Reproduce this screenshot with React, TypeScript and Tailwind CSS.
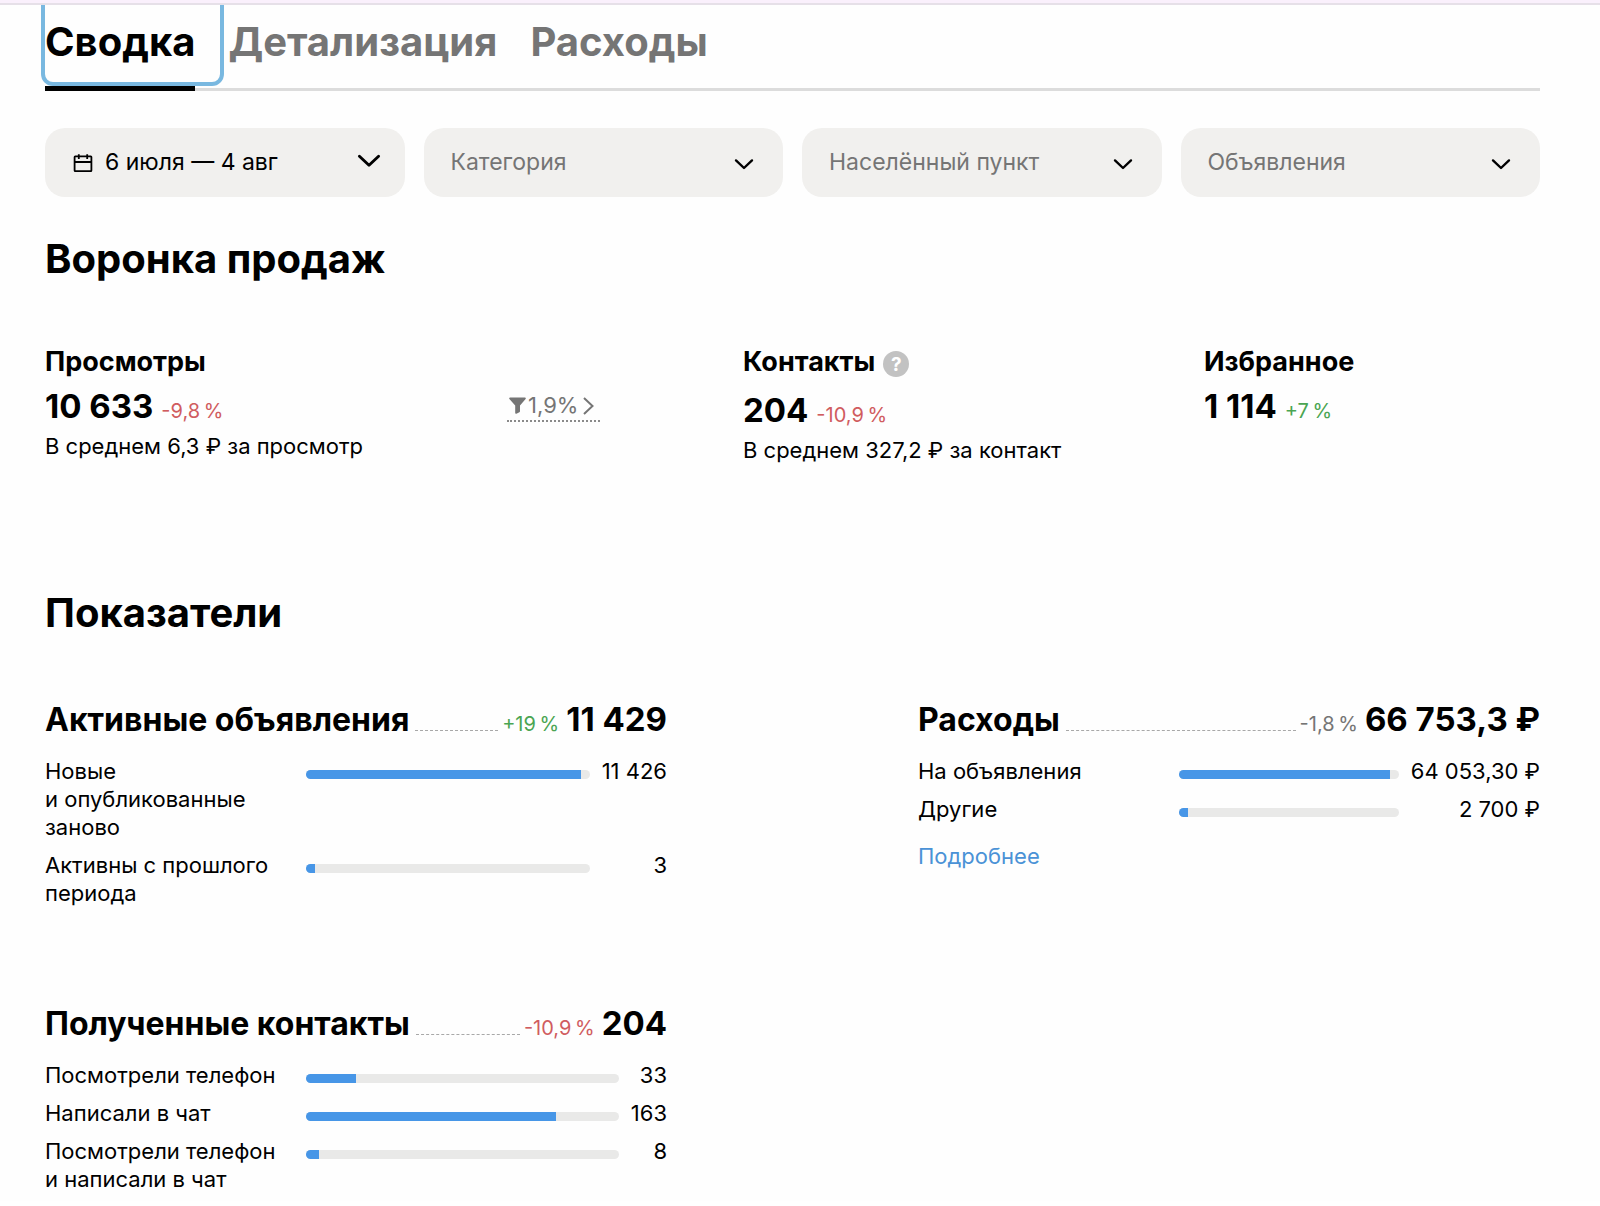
import { Fragment, type ReactNode } from "react";

type Tone = "up" | "down" | "neutral";

const toneClass: Record<Tone, string> = {
  up: "text-[#4aa552]",
  down: "text-[#d05c5f]",
  neutral: "text-[#757575]",
};

function Change({ tone, children }: { tone: Tone; children: ReactNode }) {
  return <span className={`text-[20px] ${toneClass[tone]}`}>{children}</span>;
}

function CalendarIcon() {
  return (
    <svg aria-hidden="true" viewBox="0 0 20 20" className="size-5 shrink-0" fill="none" stroke="currentColor" strokeWidth="1.8">
      <rect x="1.6" y="3.4" width="16.8" height="14.8" rx="0.6" />
      <path d="M2 9h16M5.8 1.2v4.8M14.2 1.2v4.8" />
    </svg>
  );
}

function ChevronDown({ className }: { className: string }) {
  return (
    <svg aria-hidden="true" viewBox="0 0 20 12" className={className} fill="none" stroke="currentColor" strokeWidth="2.4" strokeLinecap="round" strokeLinejoin="round">
      <path d="M2 2.4l8 7.6 8-7.6" />
    </svg>
  );
}

function FilterSelect({ label }: { label: string }) {
  return (
    <div className="relative">
      <select
        aria-label={label}
        defaultValue=""
        className="h-[69px] w-full appearance-none rounded-[20px] bg-[#f1f0ee] pr-16 pl-[27px] text-[23px] text-[#757575]"
      >
        <option value="">{label}</option>
      </select>
      <ChevronDown className="pointer-events-none absolute top-[30px] right-[29px] h-3 w-5 text-black" />
    </div>
  );
}

function Tabs() {
  return (
    <nav className="mr-15 ml-[45px] flex items-end gap-2 border-b-[3px] border-[#dcdcdc] pb-[6px]">
      <button className="relative -mt-3 rounded-lg pt-[25px] pr-[25px] pb-4 text-[40px] leading-12 font-bold outline-4 outline-[#79b8e0]">
        Сводка
        <span className="absolute right-[25px] -bottom-[9px] left-0 h-[5px] bg-black" />
      </button>
      <button className="pr-[25px] pb-4 text-[40px] leading-12 font-bold text-[#757575]">Детализация</button>
      <button className="pb-4 text-[40px] leading-12 font-bold text-[#757575]">Расходы</button>
    </nav>
  );
}

function Stat({
  title,
  hint,
  value,
  tone,
  change,
  note,
}: {
  title: string;
  hint?: boolean;
  value: string;
  tone: Tone;
  change: string;
  note?: string;
}) {
  return (
    <div>
      <div className={hint ? "flex items-center gap-2 pb-1" : "flex items-center"}>
        <h3 className="text-[27px] leading-9 font-bold">{title}</h3>
        {hint && (
          <button aria-label="Подсказка" className="mt-1 grid size-[26px] place-items-center rounded-full bg-[#c2c2c2] text-[19px] leading-none font-bold text-white">
            ?
          </button>
        )}
      </div>
      <p className="flex items-baseline gap-2 pt-[6px] leading-10">
        <strong className="text-[33px] font-bold">{value}</strong>
        <Change tone={tone}>{change}</Change>
      </p>
      {note && <p className="pt-px text-[22px] leading-7">{note}</p>}
    </div>
  );
}

function Conversion() {
  return (
    <button className="flex h-[31px] items-center gap-[2px] border-b-2 border-dotted border-[#8a8a8a] pr-[6px] pl-[2px] text-[22px] text-[#757575]">
      <svg aria-hidden="true" viewBox="0 0 17 17" className="size-[17px]" fill="currentColor">
        <path d="M1.2.4h14.6c1 0 1.3.9.8 1.6L11 8.6v5.6c0 .5-.2.8-.6 1l-3 1.5c-.6.3-1.2 0-1.2-.7V8.600L.4 2C-.1 1.300.2.4 1.2.4z" />
      </svg>
      1,9%
      <svg aria-hidden="true" viewBox="0 0 11 18" className="ml-[3px] h-[18px] w-[11px]" fill="none" stroke="currentColor" strokeWidth="2">
        <path d="M1 1l8.500 8L1 17" />
      </svg>
    </button>
  );
}

type Row = { label: string; percent: number; value: string };

function Metric({
  title,
  tone,
  change,
  total,
  rows,
  children,
}: {
  title: string;
  tone: Tone;
  change: string;
  total: string;
  rows: Row[];
  children?: ReactNode;
}) {
  return (
    <section>
      <div className="flex items-baseline leading-10">
        <h3 className="text-[32px] font-bold">{title}</h3>
        <span className="mr-1 ml-[6px] grow border-b border-dashed border-[#a8a8a8]" />
        <Change tone={tone}>{change}</Change>
        <strong className="ml-[7px] text-[33px] font-bold">{total}</strong>
      </div>
      <div className="mt-[13px] grid grid-cols-[42%_1fr_auto] gap-y-[10px] text-[22px] leading-7">
        {rows.map((row) => (
          <Fragment key={row.label}>
            <div className="pr-5">{row.label}</div>
            <div role="meter" aria-label={row.label} aria-valuenow={row.percent} aria-valuemin={0} aria-valuemax={100} className="mt-[13px] h-[9px] overflow-hidden rounded-full bg-[#e9e9e8]">
              <div className="h-full bg-[#4796e7]" style={{ width: `${row.percent}%` }} />
            </div>
            <div className="pl-3 text-right">{row.value}</div>
          </Fragment>
        ))}
      </div>
      {children}
    </section>
  );
}

export default function App() {
  return (
    <div className="bg-[#fefefe] pb-2 font-['Inter','Liberation_Sans',sans-serif] text-black">
      <div className="relative z-10 h-[5px] border-b-2 border-[#e6e0e8] bg-[#faf0fc]" />
      <Tabs />
      <main className="mr-15 ml-[45px]">
        <div className="mt-[37px] grid grid-cols-4 gap-x-[19px]">
          <button className="flex h-[69px] items-center gap-3 rounded-[20px] bg-[#f1f0ee] pr-6 pl-7 text-[23px]">
            <CalendarIcon />
            <span>6 июля — 4 авг</span>
            <ChevronDown className="mb-1 ml-auto h-[15px] w-6" />
          </button>
          <FilterSelect label="Категория" />
          <FilterSelect label="Населённый пункт" />
          <FilterSelect label="Объявления" />
        </div>

        <h2 className="mt-[38px] text-[40px] leading-12 font-bold">Воронка продаж</h2>
        <div className="mt-[61px] grid grid-cols-[462fr_236fr_461fr_336fr] items-start">
          <Stat title="Просмотры" value="10 633" tone="down" change={"-9,8\u2009%"} note="В среднем 6,3 ₽ за просмотр" />
          <div className="pt-[47px]">
            <Conversion />
          </div>
          <Stat title="Контакты" hint value="204" tone="down" change={"-10,9\u2009%"} note="В среднем 327,2 ₽ за контакт" />
          <Stat title="Избранное" value="1 114" tone="up" change={"+7\u2009%"} />
        </div>

        <h2 className="mt-[125px] text-[40px] leading-12 font-bold">Показатели</h2>
        <div className="mt-[62px] grid grid-cols-2 gap-x-[251px] gap-y-24">
          <Metric
            title="Активные объявления"
            tone="up"
            change={"+19\u2009%"}
            total="11 429"
            rows={[
              { label: "Новые и\u00a0опубликованные заново", percent: 97, value: "11 426" },
              { label: "Активны с прошлого периода", percent: 3, value: "3" },
            ]}
          />
          <Metric
            title="Расходы"
            tone="neutral"
            change={"-1,8\u2009%"}
            total="66 753,3 ₽"
            rows={[
              { label: "На объявления", percent: 96, value: "64 053,30 ₽" },
              { label: "Другие", percent: 4, value: "2 700 ₽" },
            ]}
          >
            <a href="#details" className="mt-[19px] inline-block text-[22px] leading-7 text-[#4a92d6]">
              Подробнее
            </a>
          </Metric>
          <Metric
            title="Полученные контакты"
            tone="down"
            change={"-10,9\u2009%"}
            total="204"
            rows={[
              { label: "Посмотрели телефон", percent: 16, value: "33" },
              { label: "Написали в чат", percent: 80, value: "163" },
              { label: "Посмотрели телефон и\u00a0написали в чат", percent: 4, value: "8" },
            ]}
          />
        </div>
      </main>
    </div>
  );
}
